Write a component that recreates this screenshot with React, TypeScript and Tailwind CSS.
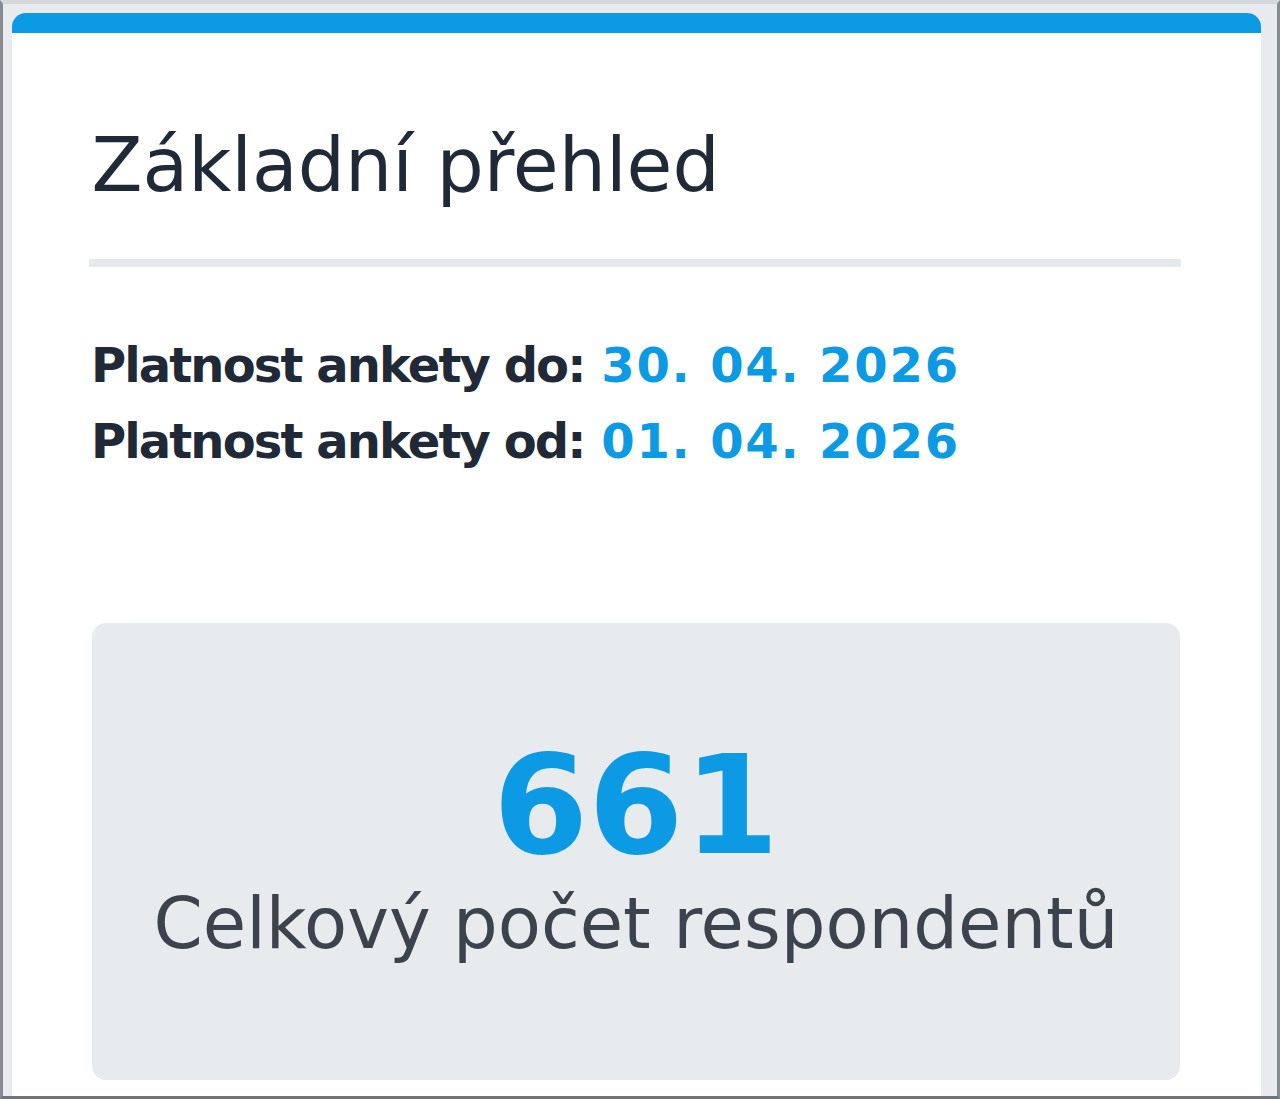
const font = { fontFamily: '"DejaVu Sans", Verdana, sans-serif' }

function DateRow({ label, value }: { label: string; value: string }) {
  return (
    <p className="text-[48px] leading-[76px] font-bold text-[#1f2937] whitespace-nowrap">
      <span className="tracking-[-1.9px]">{label}</span>{' '}
      <span className="text-[#0b9ae3] tracking-[1.8px]">{value}</span>
    </p>
  )
}

function App() {
  return (
    <div
      style={font}
      className="h-[1099px] w-[1280px] overflow-hidden bg-[#e8eaed] border-x-[3px] border-b-[3px] border-x-[#868a91] border-b-[#6f737a] border-t-[4px] border-t-[#d4d7db] pl-[9px] pt-[9px]"
    >
      <div className="w-[1249px] min-h-[1200px] bg-white rounded-t-[14px] border-t-[20px] border-[#0b9ae3] pl-[77px] pr-[80px] pt-[96px]">
        <h2 className="ml-[2.5px] text-[74.5px] leading-[74px] text-[#1f2937] whitespace-nowrap">Základní přehled</h2>
        <div className="mt-[56px] h-[8px] bg-[#e5e8ec]" />

        <div className="mt-[60px] ml-[2px]">
          <DateRow label="Platnost ankety do:" value="30. 04. 2026" />
          <DateRow label="Platnost ankety od:" value="01. 04. 2026" />
        </div>

        <div className="mt-[144px] h-[457px] rounded-[14px] bg-[#e8ebee] flex flex-col items-center justify-center ml-[3px] mr-[1px]">
          <span className="text-[137px] leading-[138px] font-bold text-[#0b9ae3]">661</span>
          <span className="mt-[7px] text-[70.5px] leading-[84px] text-[#3d434c] whitespace-nowrap">Celkový počet respondentů</span>
        </div>
      </div>
    </div>
  )
}

export default App
